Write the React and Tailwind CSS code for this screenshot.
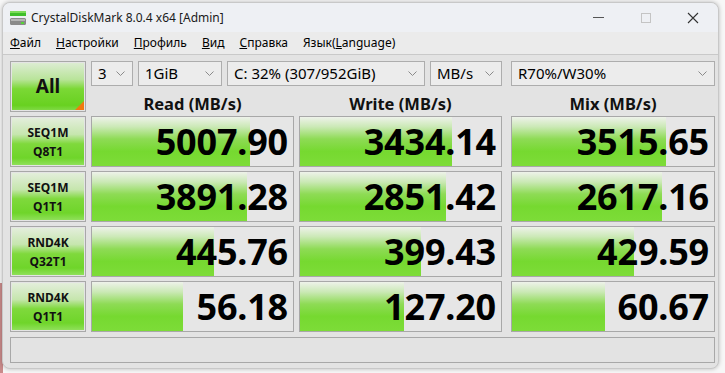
import React from "react";

const rows = [
  { l1: "SEQ1M", l2: "Q8T1", v: [["5007.90", 158], ["3434.14", 152], ["3515.65", 154]] },
  { l1: "SEQ1M", l2: "Q1T1", v: [["3891.28", 155], ["2851.42", 146], ["2617.16", 150]] },
  { l1: "RND4K", l2: "Q32T1", v: [["445.76", 122], ["399.43", 121], ["429.59", 122]] },
  { l1: "RND4K", l2: "Q1T1", v: [["56.18", 91], ["127.20", 104], ["60.67", 93]] },
];

const font = { fontFamily: '"Noto Sans", "Open Sans", "Liberation Sans", sans-serif' };

function Chevron() {
  return (
    <svg width="9" height="5" viewBox="0 0 9 5" className="shrink-0">
      <path d="M0.5 0.5 L4.5 4.5 L8.5 0.5" fill="none" stroke="#8a8a8a" strokeWidth="1" />
    </svg>
  );
}

function Select({ text, className }) {
  return (
    <div className={`h-[25px] border border-[#adadad] bg-[#ececec] flex items-center justify-between pl-[6px] pr-[7px] text-[15px] text-black ${className}`}>
      <span className="leading-none">{text}</span>
      <Chevron />
    </div>
  );
}

function Label({ l1, l2 }) {
  return (
    <div className="h-[51px] w-[76px] border border-[#a8a8a8] p-[1px] bg-[#e4e4e4]">
      <div className="h-full w-full bg-[linear-gradient(to_bottom,#e3eedb_0%,#c6e6ae_35%,#7fd93c_55%,#6fd52a_85%,#8fe05a_100%)] flex flex-col items-center justify-center text-[12px] font-bold leading-[19px] text-[#111]">
        <span>{l1}</span>
        <span>{l2}</span>
      </div>
    </div>
  );
}

function Value({ text, bar, w }) {
  return (
    <div className={`relative h-[51px] ${w} border border-[#a8a8a8] bg-[#e6e6e6]`}>
      <div
        className="absolute left-0 top-0 bottom-0 bg-[linear-gradient(to_bottom,#eef2ea_0%,#cbe9b6_20%,#8edb55_45%,#76d930_70%,#7ddc38_100%)]"
        style={{ width: bar }}
      />
      <div className="relative h-full flex items-center justify-end pr-[5px] text-[36px] font-bold leading-none text-black tracking-[-0.2px]">
        {text}
      </div>
    </div>
  );
}

export default function App() {
  return (
    <div className="w-[725px] h-[373px] bg-[#f7f7f7] overflow-hidden relative" style={font}>
      <div className="absolute left-0 bottom-0 w-[3px] h-[90px] bg-[#c98a8a]" />
      <div className="absolute left-[2px] top-[2px] w-[717px] h-[367px] rounded-[8px] overflow-hidden border border-[#c8c8c8] bg-[#e3e3e3] shadow-[0_0_4px_rgba(0,0,0,0.25)] flex flex-col">
        {/* Title bar */}
        <div className="h-[29px] bg-[#eef0f4] flex items-center shrink-0">
          <svg width="18" height="16" viewBox="0 0 18 16" className="ml-[6px]">
            <rect x="1" y="1" width="16" height="5" fill="#3fbf2a" />
            <rect x="1" y="1" width="16" height="2" fill="#7ddc5a" />
            <rect x="1" y="8" width="16" height="7" rx="1.5" fill="#8a8a8a" />
            <rect x="2" y="9" width="14" height="2" fill="#b5b5b5" />
            <rect x="12" y="12" width="3" height="2" fill="#57d33a" />
          </svg>
          <span className="ml-[4px] text-[12px] text-[#1a1a1a]">CrystalDiskMark 8.0.4 x64 [Admin]</span>
          <div className="ml-auto flex items-center h-full">
            <div className="w-[47px] flex justify-center">
              <div className="w-[11px] h-[1px] bg-[#555]" />
            </div>
            <div className="w-[47px] flex justify-center">
              <div className="w-[10px] h-[10px] border border-[#c4c4c4]" />
            </div>
            <div className="w-[47px] flex justify-center mr-[2px]">
              <svg width="12" height="12" viewBox="0 0 12 12">
                <path d="M1 1 L11 11 M11 1 L1 11" stroke="#333" strokeWidth="1.1" />
              </svg>
            </div>
          </div>
        </div>
        {/* Menu */}
        <div className="h-[23px] bg-[#ebebeb] border-b border-[#c9c9c9] flex items-center pl-[7px] gap-[15px] text-[12px] text-black shrink-0">
          <span><u>Ф</u>айл</span>
          <span><u>Н</u>астройки</span>
          <span><u>П</u>рофиль</span>
          <span><u>В</u>ид</span>
          <span><u>С</u>правка</span>
          <span>Язык(<u>L</u>anguage)</span>
        </div>
        {/* Body */}
        <div className="pl-[7px] pt-[6px] flex flex-col gap-[4px]">
          <div className="flex">
            <div className="relative h-[51px] w-[76px] border border-[#a8a8a8] p-[1px] bg-[#e4e4e4]">
              <div className="h-full w-full bg-[linear-gradient(to_bottom,#dcecd2_0%,#b9e49a_35%,#7bd835_55%,#68d120_90%,#7fd944_100%)] flex items-center justify-center text-[19px] font-bold text-[#111]">
                All
              </div>
              <div className="absolute right-[1px] bottom-[1px] w-0 h-0 border-l-[9px] border-l-transparent border-b-[9px] border-b-[#f07a10]" />
            </div>
            <div className="flex flex-col ml-[5px]">
              <div className="flex">
                <Select text="3" className="w-[42px]" />
                <Select text="1GiB" className="w-[84px] ml-[5px]" />
                <Select text="C: 32% (307/952GiB)" className="w-[198px] ml-[5px]" />
                <Select text="MB/s" className="w-[72px] ml-[5px]" />
                <Select text="R70%/W30%" className="w-[204px] ml-[9px]" />
              </div>
              <div className="flex h-[26px] items-end text-[16.5px] leading-[16px] font-bold text-[#111]">
                <div className="w-[203px] text-center">Read (MB/s)</div>
                <div className="w-[203px] ml-[5px] text-center">Write (MB/s)</div>
                <div className="w-[204px] ml-[9px] text-center">Mix (MB/s)</div>
              </div>
            </div>
          </div>
          {rows.map((r, i) => (
            <div key={i} className="flex">
              <Label l1={r.l1} l2={r.l2} />
              <div className="ml-[5px]"><Value text={r.v[0][0]} bar={r.v[0][1]} w="w-[203px]" /></div>
              <div className="ml-[5px]"><Value text={r.v[1][0]} bar={r.v[1][1]} w="w-[203px]" /></div>
              <div className="ml-[9px]"><Value text={r.v[2][0]} bar={r.v[2][1]} w="w-[204px]" /></div>
            </div>
          ))}
          <div className="mt-[1px] h-[26px] w-[705px] border border-[#a8a8a8] bg-[#e3e3e3]" />
        </div>
      </div>
    </div>
  );
}
